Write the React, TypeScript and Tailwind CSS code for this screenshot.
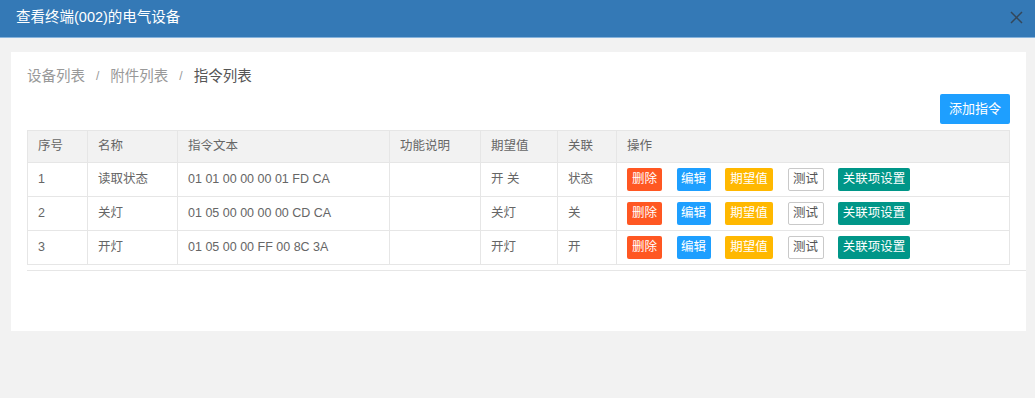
import React from "react";

const font = "font-['Liberation_Sans','Noto_Sans_CJK_SC',sans-serif]";

type Row = {
  no: string;
  name: string;
  text: string;
  desc: string;
  expect: string;
  link: string;
};

const rows: Row[] = [
  { no: "1", name: "读取状态", text: "01 01 00 00 00 01 FD CA", desc: "", expect: "开 关", link: "状态" },
  { no: "2", name: "关灯", text: "01 05 00 00 00 00 CD CA", desc: "", expect: "关灯", link: "关" },
  { no: "3", name: "开灯", text: "01 05 00 00 FF 00 8C 3A", desc: "", expect: "开灯", link: "开" },
];

const cols = ["w-[60px]", "w-[90px]", "w-[212px]", "w-[91px]", "w-[77px]", "w-[59px]"];

const Cell = ({ w, children, last }: { w: string; children?: React.ReactNode; last?: boolean }) => (
  <div
    className={`${w} ${last ? "flex-1" : "shrink-0 border-r border-[#e6e6e6]"} flex items-center pl-[10px] whitespace-nowrap`}
  >
    {children}
  </div>
);

const Actions = () => (
  <div className="flex items-center gap-[14.5px] text-[12.5px] leading-[23px]">
    <span className="w-[35px] h-[23px] rounded-[2px] bg-[#ff5722] text-white text-center">删除</span>
    <span className="w-[34px] h-[23px] rounded-[2px] bg-[#1e9fff] text-white text-center">编辑</span>
    <span className="w-[48px] h-[23px] rounded-[2px] bg-[#ffb800] text-white text-center">期望值</span>
    <span className="w-[36px] h-[23px] rounded-[2px] border border-[#c9c9c9] bg-white text-[#555] text-center leading-[21px]">
      测试
    </span>
    <span className="w-[72px] h-[23px] rounded-[2px] bg-[#009688] text-white text-center">关联项设置</span>
  </div>
);

export default function App() {
  return (
    <div className={`${font} w-[1035px] h-[398px] bg-[#f2f2f2] flex flex-col`}>
      <div className="h-[38px] shrink-0 bg-[#3479b6] border-b border-[#86b3dc] flex items-center justify-between pl-4 pr-[12px]">
        <span className="text-white text-[14.5px] leading-[20px] -mt-[4px]">查看终端(002)的电气设备</span>
        <svg width="13" height="13" viewBox="0 0 13 13" className="-mt-[2px]">
          <path d="M1 1L12 12M12 1L1 12" stroke="#34475a" strokeWidth="1.5" />
        </svg>
      </div>

      <div className="pt-[14px] pl-[11px] pr-[9px]">
        <div className="bg-white h-[279px] pt-[14px] pl-4">
          <div className="h-[20px] leading-[20px] text-[14.5px] text-[#999] flex items-center">
            <span>设备列表</span>
            <span className="mx-[11px] text-[12px]">/</span>
            <span>附件列表</span>
            <span className="mx-[11px] text-[12px]">/</span>
            <span className="text-[#555]">指令列表</span>
          </div>

          <div className="flex justify-end pr-4 mt-[8px]">
            <button className="w-[70px] h-[30px] rounded-[2px] bg-[#1e9fff] text-white text-[13px]">添加指令</button>
          </div>

          <div className="mr-4 mt-[6px] border border-[#e6e6e6] text-[12.5px] text-[#666]">
            <div className="flex h-[32px] bg-[#f2f2f2] border-b border-[#e6e6e6]">
              <Cell w={cols[0]}>序号</Cell>
              <Cell w={cols[1]}>名称</Cell>
              <Cell w={cols[2]}>指令文本</Cell>
              <Cell w={cols[3]}>功能说明</Cell>
              <Cell w={cols[4]}>期望值</Cell>
              <Cell w={cols[5]}>关联</Cell>
              <Cell w="" last>
                操作
              </Cell>
            </div>
            {rows.map((r, i) => (
              <div
                key={r.no}
                className={`flex h-[33px] ${i < rows.length - 1 ? "border-b border-[#e6e6e6] h-[34px]" : ""}`}
              >
                <Cell w={cols[0]}>{r.no}</Cell>
                <Cell w={cols[1]}>{r.name}</Cell>
                <Cell w={cols[2]}>{r.text}</Cell>
                <Cell w={cols[3]}>{r.desc}</Cell>
                <Cell w={cols[4]}>{r.expect}</Cell>
                <Cell w={cols[5]}>{r.link}</Cell>
                <Cell w="" last>
                  <Actions />
                </Cell>
              </div>
            ))}
          </div>

          <div className="mt-[5px] border-t border-[#e6e6e6]" />
        </div>
      </div>
    </div>
  );
}
